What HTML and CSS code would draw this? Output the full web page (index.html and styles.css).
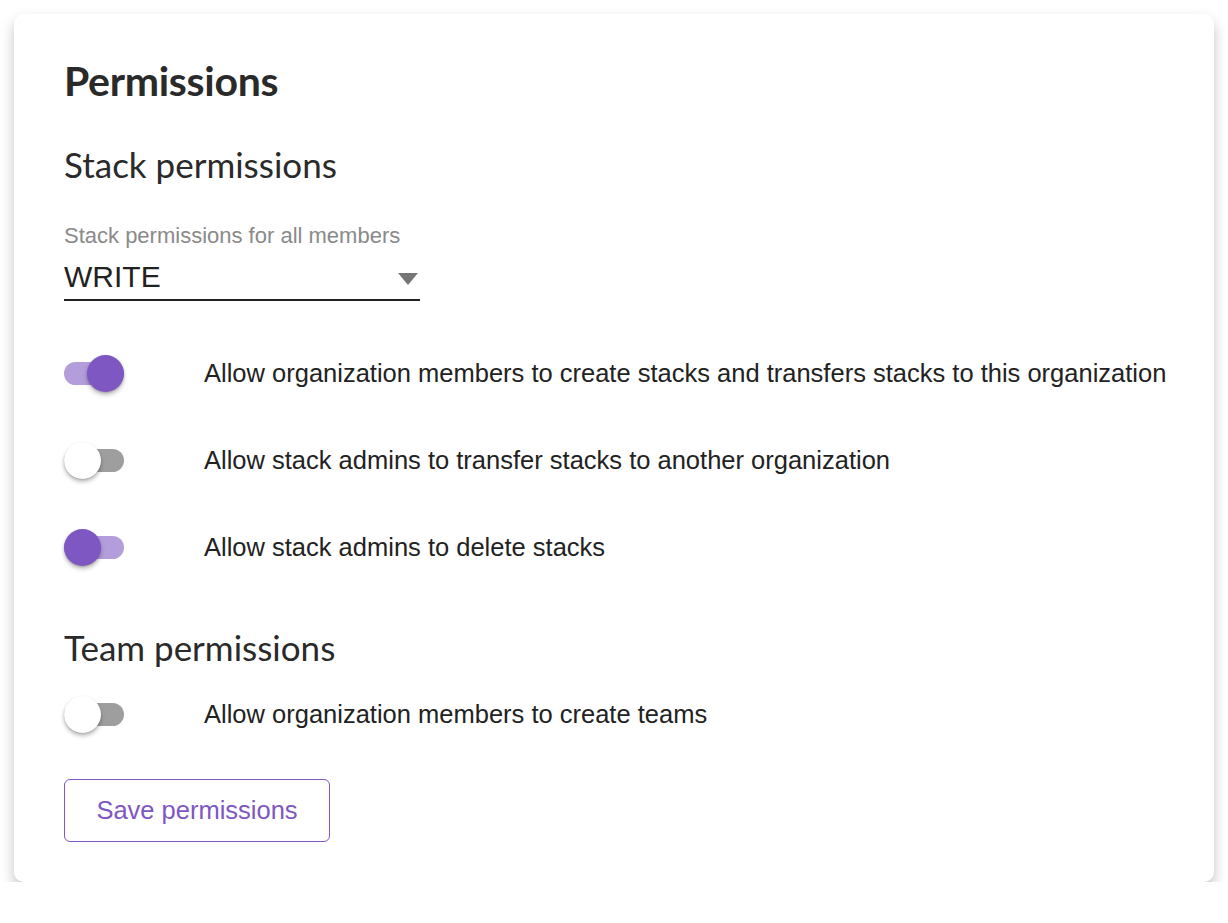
FILE: index.html
```html
<!DOCTYPE html>
<html>
<head>
<meta charset="utf-8">
<link rel="stylesheet" href="styles.css">
</head>
<body>
<div class="card">
  <h1 class="title">Permissions</h1>
  <h2 class="section">Stack permissions</h2>
  <div class="field">
    <div class="field-label">Stack permissions for all members</div>
    <div class="select">
      <span class="select-value">WRITE</span>
      <svg class="arrow" width="20" height="13" viewBox="0 0 20 13"><polygon points="0,0 20,0 10,12" fill="#757575"/></svg>
    </div>
  </div>
  <div class="toggles">
    <div class="row">
      <span class="switch on"><span class="track"></span><span class="thumb"></span></span>
      <span class="row-text">Allow organization members to create stacks and transfers stacks to this organization</span>
    </div>
    <div class="row">
      <span class="switch off"><span class="track"></span><span class="thumb"></span></span>
      <span class="row-text">Allow stack admins to transfer stacks to another organization</span>
    </div>
    <div class="row">
      <span class="switch half"><span class="track"></span><span class="thumb"></span></span>
      <span class="row-text">Allow stack admins to delete stacks</span>
    </div>
  </div>
  <h2 class="section team">Team permissions</h2>
  <div class="row team-row">
    <span class="switch off"><span class="track"></span><span class="thumb"></span></span>
    <span class="row-text">Allow organization members to create teams</span>
  </div>
  <button class="save">Save permissions</button>
</div>
</body>
</html>
```
FILE: styles.css
```css
html, body {
  margin: 0;
  padding: 0;
  background: #ffffff;
}
body {
  padding: 14px 14px 0 14px;
  font-family: "Liberation Sans", Arial, sans-serif;
  color: #222222;
}
.card {
  width: 1200px;
  height: 868px;
  box-sizing: border-box;
  background: #ffffff;
  border-radius: 10px;
  box-shadow: 0 7px 14px rgba(0, 0, 0, 0.24);
  padding: 43px 30px 0 50px;
}
.title {
  margin: 0;
  font-family: "Lato", "Noto Sans", sans-serif;
  font-weight: 700;
  font-size: 41px;
  line-height: 48px;
  color: #2a2a2a;
  letter-spacing: -0.3px;
}
.section {
  margin: 39px 0 0 0;
  font-family: "Lato", "Noto Sans", sans-serif;
  font-weight: 400;
  font-size: 35px;
  line-height: 40px;
  color: #2a2a2a;
}
.field {
  margin-top: 39px;
  width: 356px;
}
.field-label {
  font-size: 22px;
  line-height: 26px;
  color: #8a8a8a;
}
.select {
  display: flex;
  align-items: flex-end;
  justify-content: space-between;
  height: 50px;
  border-bottom: 2px solid #222222;
}
.select-value {
  font-size: 30px;
  line-height: 34px;
  color: #222222;
  padding-bottom: 5px;
}
.arrow {
  margin-right: 2px;
  margin-bottom: 13px;
}
.toggles {
  margin-top: 54px;
  display: flex;
  flex-direction: column;
  gap: 50px;
}
.row {
  display: flex;
  align-items: center;
  height: 37px;
}
.switch {
  position: relative;
  width: 60px;
  height: 37px;
  flex: none;
  margin-right: 80px;
}
.track {
  position: absolute;
  left: 0;
  top: 7px;
  width: 60px;
  height: 23px;
  border-radius: 12px;
  background: #9e9e9e;
}
.thumb {
  position: absolute;
  top: 0;
  width: 37px;
  height: 37px;
  border-radius: 50%;
  background: #ffffff;
  box-shadow: 0 3px 4px rgba(0, 0, 0, 0.25), 0 1px 2px rgba(0, 0, 0, 0.15);
}
.switch.on .track, .switch.half .track {
  background: #b39ddb;
}
.switch.on .thumb {
  left: 23px;
  background: #7e57c2;
}
.switch.half .thumb {
  left: 0;
  background: #7e57c2;
}
.switch.off .thumb {
  left: 0;
}
.row-text {
  font-size: 25.5px;
  color: #222222;
  white-space: nowrap;
}
.section.team {
  margin-top: 61px;
}
.team-row {
  margin-top: 29px;
}
.save {
  display: block;
  margin-top: 46px;
  width: 266px;
  height: 63px;
  background: #ffffff;
  border: 1.5px solid #7e57c2;
  border-radius: 6px;
  color: #7e57c2;
  font-family: "Liberation Sans", Arial, sans-serif;
  font-size: 25.5px;
  padding: 0;
  cursor: pointer;
}
```
